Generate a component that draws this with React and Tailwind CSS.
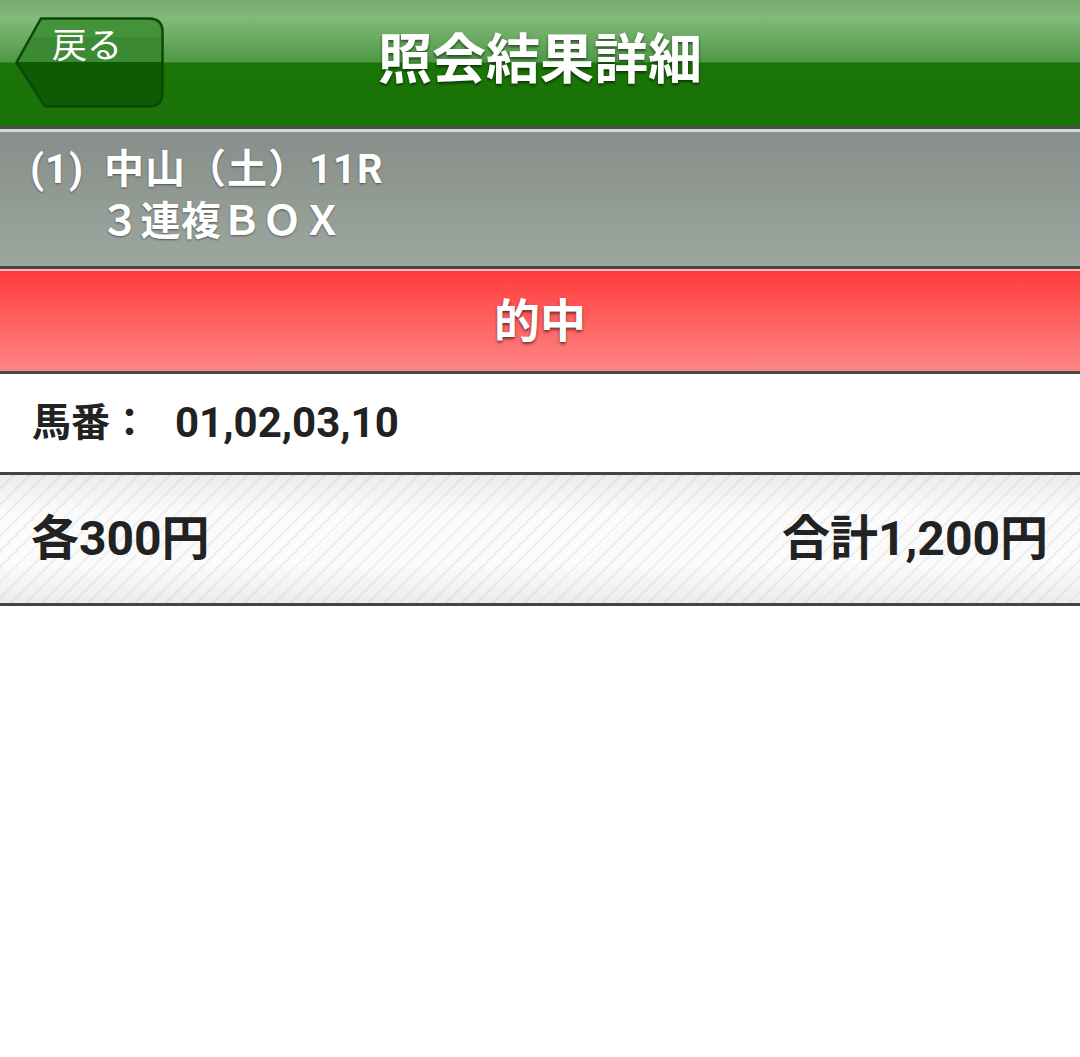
import React from "react";

const FONT = { fontFamily: 'Roboto, "Noto Sans CJK JP", sans-serif' };

const BackButton = () => {
  return (
    <button className="absolute left-[15px] top-[17px] w-[149px] h-[91px]">
      <svg width="149" height="91" viewBox="0 0 149 91" className="absolute inset-0">
        <defs>
          <clipPath id="btnclip">
            <path d="M26 1.5 H134 Q147.5 1.5 147.5 15 V76 Q147.5 89.5 134 89.5 H30 L1.5 45.5 Z" />
          </clipPath>
        </defs>
        <g clipPath="url(#btnclip)">
          <rect x="0" y="0" width="149" height="46" fill="#3d8a34" />
          <rect x="0" y="0" width="149" height="20" fill="#4a9840" opacity="0.6" />
          <rect x="0" y="45" width="149" height="46" fill="#0d5c02" />
        </g>
        <path
          d="M26 1.5 H134 Q147.5 1.5 147.5 15 V76 Q147.5 89.5 134 89.5 H30 L1.5 45.5 Z"
          fill="none"
          stroke="#0b4a06"
          strokeWidth="2.5"
        />
      </svg>
      <span className="absolute left-[37px] top-[12px] text-[35px] leading-none text-white" style={FONT}>
        戻る
      </span>
    </button>
  );
};

export default function App() {
  return (
    <div className="w-[1080px] min-h-[1057px] bg-white" style={FONT}>
      {/* header */}
      <div className="relative h-[129px] border-b-[3px] border-[#4d4d4d] bg-[linear-gradient(to_bottom,#76a96f_0px,#83ba7b_18px,#4e9845_62px,#1b7508_63px,#197205_126px)] flex items-center justify-center">
        <BackButton />
        <h1 className="text-[54px] font-bold text-white leading-none [text-shadow:0_2px_3px_rgba(0,0,0,0.55)] mt-[-4px]">
          照会結果詳細
        </h1>
      </div>

      {/* race info */}
      <div className="h-[140px] border-t-[3px] border-[#d6d9d6] border-b-[3px] border-b-[#454545] bg-[linear-gradient(to_bottom,#888e89,#9ca69f)] pl-[30px] pt-[15px] text-white font-bold [text-shadow:0_1px_2px_rgba(0,0,0,0.45)]">
        <div className="text-[40px] leading-[46px] tracking-[1px]">
          <span>(1)</span>
          <span className="ml-[20px]">中山（土）11R</span>
        </div>
        <div className="text-[40px] leading-[58px] pl-[70px] tracking-[0.5px]">３連複ＢＯＸ</div>
      </div>

      {/* hit */}
      <div className="h-[105px] border-t-[2px] border-[#ffb3b3] border-b-[3px] border-b-[#484848] bg-[linear-gradient(to_bottom,#ff3b3b,#ff8686)] flex items-center justify-center">
        <span className="text-[46px] font-bold text-white leading-none [text-shadow:0_2px_3px_rgba(0,0,0,0.55)]">
          的中
        </span>
      </div>

      {/* horse numbers */}
      <div className="h-[101px] border-b-[3px] border-[#444] bg-white flex items-center pl-[32px] text-[#222] font-bold">
        <span className="text-[39px] leading-none">馬番：</span>
        <span className="text-[42px] leading-none ml-[26px]">01,02,03,10</span>
      </div>

      {/* amount */}
      <div className="h-[131px] border-b-[3px] border-[#444] bg-[repeating-linear-gradient(135deg,transparent_0px,transparent_9px,rgba(0,0,0,0.05)_9px,rgba(0,0,0,0.05)_11px),linear-gradient(to_bottom,#ececec,#fbfbfb_30%,#fbfbfb_70%,#ececec)] flex items-center justify-between pl-[31px] pr-[32px]">
        <span className="text-[48px] font-bold text-[#222] leading-none">各300円</span>
        <span className="text-[48px] font-bold text-[#222] leading-none">合計1,200円</span>
      </div>
    </div>
  );
}
